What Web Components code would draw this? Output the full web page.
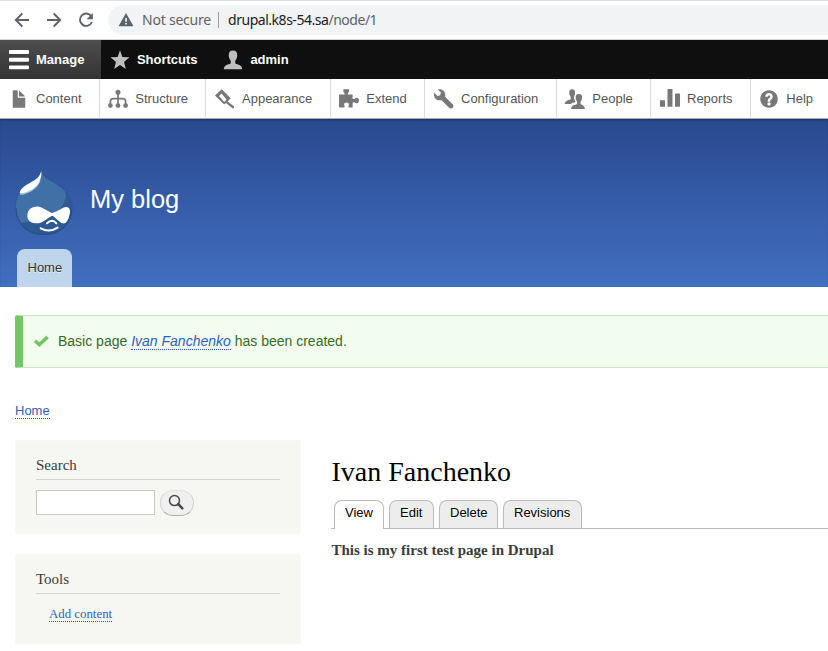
<!DOCTYPE html>
<html lang="en"><head><meta charset="utf-8"><title>Ivan Fanchenko | My blog</title>
<style>
body{margin:0;background:#fff;font-family:"Liberation Sans",sans-serif;font-size:13px;width:828px;height:651px;overflow:hidden}
</style></head><body>
<blog-page></blog-page>
<script>
const define=(name,html)=>{
  const t=document.createElement('template');t.innerHTML=html;
  customElements.define(name,class extends HTMLElement{
    constructor(){super();this.attachShadow({mode:'open'}).append(t.content.cloneNode(true));}
  });
};
const person='<path d="M8 .3C5.600.3 4.500 1.900 4.600 4.200C4.700 6.300 5.400 7.500 6.200 8.500V10.600C5.200 11.700 1 11.300.600 15.300H15.400C15 11.300 10.800 11.700 9.800 10.600V8.500C10.600 7.500 11.300 6.300 11.400 4.200C11.500 1.900 10.400.3 8 .3Z"/>';
const ICONS={
  menu:'<path d="M.8 0H15.200a.8.8 0 0 1 .8.8v1.500a.8.8 0 0 1-.8.8H.8a.8.8 0 0 1-.8-.8V.8A.8.8 0 0 1 .8 0ZM.8 6.200H15.200a.8.8 0 0 1 .8.8v1.500a.8.8 0 0 1-.8.8H.8a.8.8 0 0 1-.8-.8V7a.8.8 0 0 1 .8-.8ZM.8 12.300H15.200a.8.8 0 0 1 .8.8v1.500a.8.8 0 0 1-.8.8H.8a.8.8 0 0 1-.8-.8v-1.500a.8.8 0 0 1 .8-.8Z"/>',
  star:'<path d="M8 .1L9.900 5.500L15.600 5.700L11.200 9.500L12.700 15.200L8 12L3.300 15.200L4.800 9.500L.4 5.700L6.100 5.500Z"/>',
  person,
  file:'<path d="M12.500 7h-5C7.200 7 7 6.800 7 6.500v-5C7 1.200 6.800 1 6.500 1h-3C3.200 1 3 1.200 3 1.500v13c0 .3.200.5.5.5h9c.3 0 .5-.2.5-.5v-7c0-.3-.2-.5-.5-.5ZM8.500 6h4c.3 0 .3-.2.100-.4L8.400 1.400C8.200 1.200 8 1.200 8 1.500v4c0 .3.200.5.5.5Z"/>',
  tree:'<circle cx="8" cy="2.500" r="2"/><circle cx="1.900" cy="13.200" r="1.900"/><circle cx="8" cy="13.200" r="1.900"/><circle cx="14.100" cy="13.200" r="1.900"/><path d="M8 3V13M1.900 13V10Q1.900 7.600 4.300 7.600H11.700Q14.100 7.600 14.100 10V13" fill="none" stroke="currentColor" stroke-width="1.400"/>',
  brush:'<path fill-rule="evenodd" d="M5.400.1L12.500 7.400L10.100 10L15.300 13.900Q15.600 15.400 14.200 15.600L8.800 11.200L7.300 12.400L0 5.200ZM5.200 3.600L3.200 5.500L7.400 10.300L9.200 8.300Z"/>',
  puzzle:'<path d="M4.500 4.300Q4.900 2.900 3.500 2.300V.1H8V2.300Q6.600 2.900 7 4.300H10.900V7.700Q12.400 8.500 13.200 7Q16 6.500 16 9.200Q15.800 11.900 13.200 11.200Q12.200 10 10.900 11V14.700H8Q7 13.700 7.900 12.800Q8.200 10.800 6 10.700Q3.800 10.800 4.100 12.800Q5.100 13.700 4.100 14.700H0V4.300Z"/>',
  wrench:'<path d="M15.100 12.300L8.900 6.200C9 5.700 9.100 5.200 9 4.500C9 2 7 .1 4.500.1C4 .1 3.500.2 3.100.3L5.500 2.700L4.900 4.900L2.700 5.500L.3 3C.1 3.500 0 4 0 4.500C0 7 2 9 4.500 9C5 9 5.500 8.900 5.900 8.700L12.100 14.900C12.900 15.700 14.200 15.700 15 14.900C15.700 14.200 15.700 13 15.100 12.300Z"/>',
  people:'<path d="M5.700.1C4 .1 3.300 1.400 3.400 3C3.400 4.700 4 5.600 4.600 6.400V8C3.800 9 .1 8.700-.3 12H4.900C5.400 10.600 8 11 8.200 9.700L7.100 7.200C7 6.100 7.900 5.700 8.100 3C8.200 1.300 7.500.1 5.700.1Z"/><path d="M11 3.900C9 3.900 8.400 5.200 8.500 6.800C8.600 8.500 9.200 9.400 9.700 10.100V11.700C8.900 12.800 5 12.500 4.700 16H16C15.700 12.600 13 12.800 12.400 11.700V10.100C13.100 9.400 13.600 8.300 13.700 6.700C13.800 5 13 3.900 11 3.900Z"/>',
  chart:'<rect x="0" y="9" width="4" height="5.200" rx=".4"/><rect x="6" y="0" width="4" height="14.200" rx=".4"/><rect x="12" y="3.600" width="4" height="10.600" rx=".4"/>',
  help:'<path fill-rule="evenodd" d="M8 1c-3.900 0-7 3.100-7 7s3.100 7 7 7c3.900 0 7-3.100 7-7s-3.100-7-7-7Zm3 5c0 .6-.2 1.100-.5 1.600l-.2.200c-.1.100-.2.200-.3.400-.2.200-.4.300-.6.500l-.3.300-.1.200v.900h-2v-.7c0-.4.100-.7.200-1 .1-.3.300-.5.400-.7l.4-.4.600-.4.200-.2c.1-.2.200-.3.200-.5 0-.6-.4-1-1-1s-1 .4-1 1H5c0-1.700 1.300-3 3-3s3 1.300 3 3Zm-1.800 6.600c0 .3-.2.600-.6.600H7.400c-.3 0-.6-.3-.6-.6v-1.200c0-.3.300-.6.6-.6h1.200c.4 0 .6.300.6.600Z"/>'
};
customElements.define('ui-icon',class extends HTMLElement{
  connectedCallback(){
    if(!this.shadowRoot)this.attachShadow({mode:'open'}).innerHTML=`<style>:host{display:block;width:20px;height:20px;flex:none}svg{display:block;overflow:visible}</style><svg width="20" height="20" viewBox="0 0 16 16" fill="currentColor">${ICONS[this.getAttribute('name')]}</svg>`;
  }
});
define('browser-bar',`<style>
:host{display:flex;align-items:center;box-sizing:border-box;height:40px;background:#fff;border-top:1px solid #dee1e6;border-bottom:1px solid #d4d4d6;padding-left:12px;font:14px "Noto Sans",sans-serif;color:#5f6368}
.nav{display:flex;gap:12px}svg{display:block}
.url{display:flex;align-items:center;box-sizing:border-box;margin-left:12px;flex:1;height:30px;border-radius:15px 0 0 15px;background:#f1f3f4;padding-left:10px;white-space:nowrap}
.ns,.addr{margin-top:-2px}.ns{margin-left:8px;width:69px;letter-spacing:-.22px}.bar{width:1px;height:16px;background:#9aa0a6;margin:0 9px 0 7px}
.addr{letter-spacing:-.47px}b{font-weight:400;color:#202124}</style>
<div class="nav">
<svg width="20" height="20" viewBox="0 0 20 20" fill="none" stroke="#5f6368" stroke-width="1.900"><path d="M17 10H4M10.300 3.500L3.800 10L10.300 16.500"/></svg>
<svg width="20" height="20" viewBox="0 0 20 20" fill="none" stroke="#5f6368" stroke-width="1.900"><path d="M3 10H16M9.700 3.500L16.200 10L9.700 16.500"/></svg>
<svg width="20" height="20" viewBox="0 0 20 20"><path d="M15.300 6.200A6.200 6.200 0 1 0 15.900 12" fill="none" stroke="#5f6368" stroke-width="1.900"/><path d="M16.800 3V9.200H10.600Z" fill="#5f6368"/></svg>
</div>
<div class="url"><svg width="16" height="16" viewBox="0 0 16 16"><path fill-rule="evenodd" d="M8 1L15.500 14.200H.5ZM7.200 6V9.700H8.900V6ZM7.200 10.900V12.500H8.900V10.900Z" fill="#5f6368"/></svg><span class="ns">Not secure</span><span class="bar"></span><span class="addr"><b>drupal.k8s-54.sa</b>/node/1</span></div>`);
define('toolbar-tab',`<style>:host{display:flex;align-items:center;box-sizing:border-box;height:39px;padding:0 16.800px 0 9px;gap:7px;font-weight:700;color:#bebebe}
:host([active]){background:linear-gradient(#4e4e4e,#333);color:#fff;padding-right:16.500px}span{color:#fff}</style><slot name="icon"></slot><span><slot></slot></span>`);
define('menu-item',`<style>:host{display:flex;align-items:center;box-sizing:border-box;height:39px;padding-left:9px;gap:7px;border-right:1px solid #ddd;color:#787878}:host([tight]){padding-left:8.300px}:host(:last-child){border:0}span{color:#565656}</style><slot name="icon"></slot><span><slot></slot></span>`);
define('admin-toolbar',`<style>:host{display:block}.top{display:flex;background:#0f0f0f;height:39px}
.tray{display:grid;grid-template-columns:100px 106px 125px 94px 132px 94px 100px 1fr;height:39px;background:#fff;border-bottom:1px solid #aaa}</style>
<div class="top"><toolbar-tab active><ui-icon slot="icon" name="menu"></ui-icon>Manage</toolbar-tab><toolbar-tab><ui-icon slot="icon" name="star"></ui-icon>Shortcuts</toolbar-tab><toolbar-tab><ui-icon slot="icon" name="person"></ui-icon>admin</toolbar-tab></div>
<div class="tray"><menu-item><ui-icon slot="icon" name="file"></ui-icon>Content</menu-item><menu-item tight><ui-icon slot="icon" name="tree"></ui-icon>Structure</menu-item><menu-item><ui-icon slot="icon" name="brush"></ui-icon>Appearance</menu-item><menu-item tight><ui-icon slot="icon" name="puzzle"></ui-icon>Extend</menu-item><menu-item><ui-icon slot="icon" name="wrench"></ui-icon>Configuration</menu-item><menu-item tight><ui-icon slot="icon" name="people"></ui-icon>People</menu-item><menu-item><ui-icon slot="icon" name="chart"></ui-icon>Reports</menu-item><menu-item tight><ui-icon slot="icon" name="help"></ui-icon>Help</menu-item></div>`);
define('drop-logo',`<style>:host{display:block;width:58px;height:66px}svg{display:block}</style>
<svg width="58" height="66" viewBox="15 15 174 198"><defs><clipPath id="c"><path d="M94 17C97 33 108 40 128 50C166 70 187 96 187 131C187 177 150 210 101 210C52 210 16 175 16 129C16 98 30 80 42 64C62 46 88 46 94 17Z"/></clipPath></defs>
<g clip-path="url(#c)"><path fill="#2e5994" d="M0 0H200V220H0Z"/><path fill="#4170a7" d="M0 0H128V46C158 60 170 78 167 98C161 138 110 174 0 174Z"/><path d="M17 129C17 175 52 209 101 209C150 209 186 176 186 131" fill="none" stroke="#264f83" stroke-width="5"/></g>
<path d="M94 17C97 33 108 40 128 50C166 70 187 96 187 131M16 129C16 98 30 80 42 64" fill="none" stroke="#2c578c" stroke-width="2"/>
<path d="M29 86Q30 92 42 88C68 80 86 66 92 44Z" fill="#a9c4dc"/><path d="M94 17C90 35 78 44 61 53C42 63 30 72 29 84C46 87 72 72 84 57C92 45 95 33 94 17Z" fill="#fff"/>
<path d="M78 125C94 123 109 137 125 144C142 142 158 125 170 126C183 128 181 143 177 155C174 166 168 177 158 175C148 172 138 158 127 152C114 156 101 175 79 175C60 176 51 164 52 151C53 135 62 126 78 125Z" fill="#fff"/>
<path d="M111 175Q127 160 139 175M92 190Q118 204 143 188" fill="none" stroke="#fff" stroke-width="6" stroke-linecap="round"/></svg>`);
define('site-header',`<style>:host{display:flex;flex-direction:column;align-items:flex-start;box-sizing:border-box;height:168px;background:linear-gradient(#29498f,#416fc0);box-shadow:inset 0 2px 2px -1px #1c3468;padding:51px 15px 0}
.brand{display:flex;align-items:center;gap:17px;color:#fff;font-size:25.500px}.name{line-height:30px;margin-top:-8px}
.tab{box-sizing:border-box;height:38px;margin:13px 0 0 2px;padding:0 10.300px 0 10.500px;line-height:37px;border-radius:8px 8px 0 0;background:linear-gradient(#bed4ea,#c0d6ed);color:#333;text-shadow:0 1px #eee}</style>
<div class="brand"><drop-logo></drop-logo><span class="name">My blog</span></div><div class="tab">Home</div>`);
define('status-message',`<style>:host{display:flex;align-items:center;box-sizing:border-box;height:53px;margin:28px 0 0 15px;padding-left:11px;background:#f2fcef;border:1px solid #c9e8c4;border-left:8px solid #73c665;border-right:0;border-radius:2px 0 0 2px;color:#3a6b28;font-size:14px}
svg{margin-right:9px}p{margin:-1px 0 0;line-height:16px;padding-bottom:1px;white-space:pre}a{font-style:italic;color:#2f62b8;border-bottom:1px dotted #2a5bb5;line-height:16px}</style>
<svg width="15" height="15" viewBox="0 0 15 15"><path d="M1.100 6.800L5.300 10.700L13.600 2.900" stroke="#73c665" stroke-width="3.500" fill="none"/></svg><p>Basic page <a>Ivan Fanchenko</a> has been created.</p>`);
define('side-block',`<style>:host{display:block;box-sizing:border-box;background:#f6f6f2;border:1px solid #f8f8f4;padding:14px 20px;font-family:"Liberation Serif",serif;height:94px}:host([tools]){height:90px}h2{margin:0;height:24px;line-height:21px;font-size:15px;font-weight:400;color:#3b3b3b;border-bottom:1px solid #d3d3d0}</style><h2><slot name="title"></slot></h2><slot></slot>`);
define('search-form',`<style>:host{display:flex;gap:5px;margin-top:10px;align-items:flex-start}.i{box-sizing:border-box;width:119px;height:25px;border:1px solid #c6c6c6;background:#fff}.b{box-sizing:border-box;width:34px;height:26px;border-radius:13px;background:#f0f0f0;border:1px solid #d0d0d0;border-top-color:#e2e2e2;border-bottom-color:#adadad;display:grid;place-items:center}svg{display:block}</style>
<div class="i"></div><div class="b"><svg width="18" height="18" viewBox="0 0 18 18" fill="none" stroke="#4a4a4a"><circle cx="6.500" cy="6.600" r="5" stroke-width="1.500"/><path d="M10.300 10.200L14.300 14.300" stroke-width="2.600" stroke-linecap="round"/></svg></div>`);
define('page-article',`<style>:host{display:block;font-family:"Liberation Serif",serif}h1{margin:16px 0 0 .5px;font-size:28px;font-weight:400;line-height:32px;color:#000}
.tabs{display:flex;gap:5px;padding-left:3px;margin-top:12px;height:29px;border-bottom:1px solid #bbb;box-sizing:border-box;font:13px "Liberation Sans",sans-serif;color:#000}
.t{box-sizing:border-box;height:28px;border:1px solid #bbb;border-bottom:0;border-radius:8px 8px 0 0;background:#ededed;line-height:24px;padding:0 10px;text-shadow:0 1px #fff}.on{background:#fff;height:29px}
p{margin:11px 0 0 .5px;font-size:15px;line-height:20px;font-weight:700;color:#3b3b3b}</style>
<h1>Ivan Fanchenko</h1><div class="tabs"><span class="t on" style="width:50px">View</span><span class="t" style="width:45px">Edit</span><span class="t" style="width:59px">Delete</span><span class="t" style="width:79px">Revisions</span></div><p>This is my first test page in Drupal</p>`);
define('blog-page',`<style>:host{display:block}a{color:#2f62b8;border-bottom:1px dotted #2a5bb5}
.crumb{margin:35px 0 0 15px;height:37px;line-height:15px}.cols{display:grid;grid-template-columns:286px 1fr;gap:30px;padding-left:15px}
.side{display:grid;gap:20px;align-content:start}.add{display:block;margin:12px 0 0 13px;line-height:16px;font-size:12.850px}</style>
<browser-bar></browser-bar><admin-toolbar></admin-toolbar><site-header></site-header><status-message></status-message>
<div class="crumb"><a>Home</a></div>
<div class="cols"><div class="side"><side-block><span slot="title">Search</span><search-form></search-form></side-block><side-block tools><span slot="title">Tools</span><div class="add"><a>Add content</a></div></side-block></div><page-article></page-article></div>`);
</script></body></html>
